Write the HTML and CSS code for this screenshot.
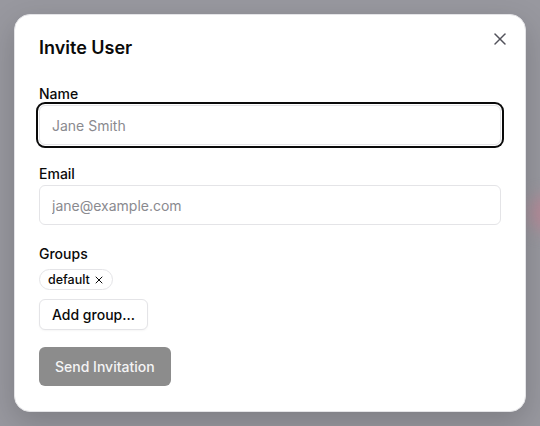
FILE: index.html
```html
<html>
  <head>
    <title>Invite User</title>
    <link rel="stylesheet" href="styles.css">
  </head>
  <body>
	<div class="backdrop">
		<div class="blob"></div>
		<div class="dialog">
			<button class="close" aria-label="Close">
				<svg width="20" height="20" viewBox="0 0 24 24" fill="none" stroke="currentColor" stroke-width="1.8" stroke-linecap="round"><path d="M18 6 6 18"/><path d="m6 6 12 12"/></svg>
			</button>
			<h2 class="title">Invite User</h2>
			<div class="field">
				<label for="name">Name</label>
				<input id="name" class="input focused" placeholder="Jane Smith">
			</div>
			<div class="field">
				<label for="email">Email</label>
				<input id="email" class="input" placeholder="jane@example.com">
			</div>
			<div class="field groups">
				<label>Groups</label>
				<div class="chips">
					<span class="chip">default
						<svg width="12" height="12" viewBox="0 0 24 24" fill="none" stroke="currentColor" stroke-width="2" stroke-linecap="round"><path d="M18 6 6 18"/><path d="m6 6 12 12"/></svg>
					</span>
				</div>
				<button class="btn-outline">Add group...</button>
			</div>
			<button class="btn-primary" disabled>Send Invitation</button>
		</div>
	</div>
  </body>
</html>
```

FILE: styles.css
```css
body {
	margin: 0;
	background-color: #98989f;
	font-family: 'Inter', 'Liberation Sans', sans-serif;
	color: #0a0a0a;
}

.backdrop {
	position: relative;
	width: 540px;
	height: 426px;
	padding: 14px;
	box-sizing: border-box;
	overflow: hidden;
}

.blob {
	position: absolute;
	right: -20px;
	top: 195px;
	width: 30px;
	height: 36px;
	border-radius: 50%;
	background-color: #b58a98;
	filter: blur(8px);
}

.dialog {
	position: relative;
	width: 512px;
	height: 398px;
	box-sizing: border-box;
	background-color: #fff;
	border: 1px solid #e4e4e7;
	border-radius: 16px;
	padding: 19px 24px 24px;
	box-shadow: 0 10px 30px rgba(0, 0, 0, 0.18);
}

.close {
	position: absolute;
	top: 14px;
	right: 15px;
	background: none;
	border: none;
	padding: 0;
	width: 20px;
	height: 20px;
	display: flex;
	align-items: center;
	justify-content: center;
	color: #52525b;
	cursor: pointer;
}

.title {
	margin: 0 0 25px;
	font-size: 18px;
	line-height: 28px;
	font-weight: 600;
}

.field {
	margin-bottom: 22px;
}

.field.groups {
	margin-bottom: 17px;
}

.field label {
	display: block;
	font-size: 14px;
	line-height: 14px;
	font-weight: 500;
	margin-bottom: 4px;
}

.input {
	display: block;
	width: 100%;
	height: 40px;
	box-sizing: border-box;
	border: 1px solid #e4e4e7;
	border-radius: 6px;
	padding: 0 12px;
	font-family: inherit;
	font-size: 14px;
	color: #0a0a0a;
	outline: none;
}

.input::placeholder {
	color: #8a8a8f;
}

.input.focused {
	box-shadow: 0 0 0 1px #fff, 0 0 0 3px #0a0a0a;
}

.chips {
	display: flex;
	gap: 6px;
	margin-top: 8px;
	margin-bottom: 9px;
}

.chip {
	display: inline-flex;
	align-items: center;
	gap: 3px;
	height: 21px;
	box-sizing: border-box;
	padding: 0 7px 0 8px;
	border: 1px solid #e4e4e7;
	border-radius: 999px;
	font-size: 12.5px;
	font-weight: 500;
}

.groups label {
	margin-bottom: 0;
}

.btn-outline {
	height: 31px;
	padding: 0 12px;
	background-color: #fff;
	border: 1px solid #e4e4e7;
	border-radius: 6px;
	font-family: inherit;
	font-size: 14px;
	font-weight: 500;
	color: #0a0a0a;
	box-shadow: 0 1px 2px rgba(0, 0, 0, 0.04);
	cursor: pointer;
}

.btn-primary {
	height: 39px;
	padding: 0 16px;
	background-color: #8c8c8c;
	border: none;
	border-radius: 6px;
	font-family: inherit;
	font-size: 14px;
	font-weight: 500;
	color: #f4f4f5;
}
```
